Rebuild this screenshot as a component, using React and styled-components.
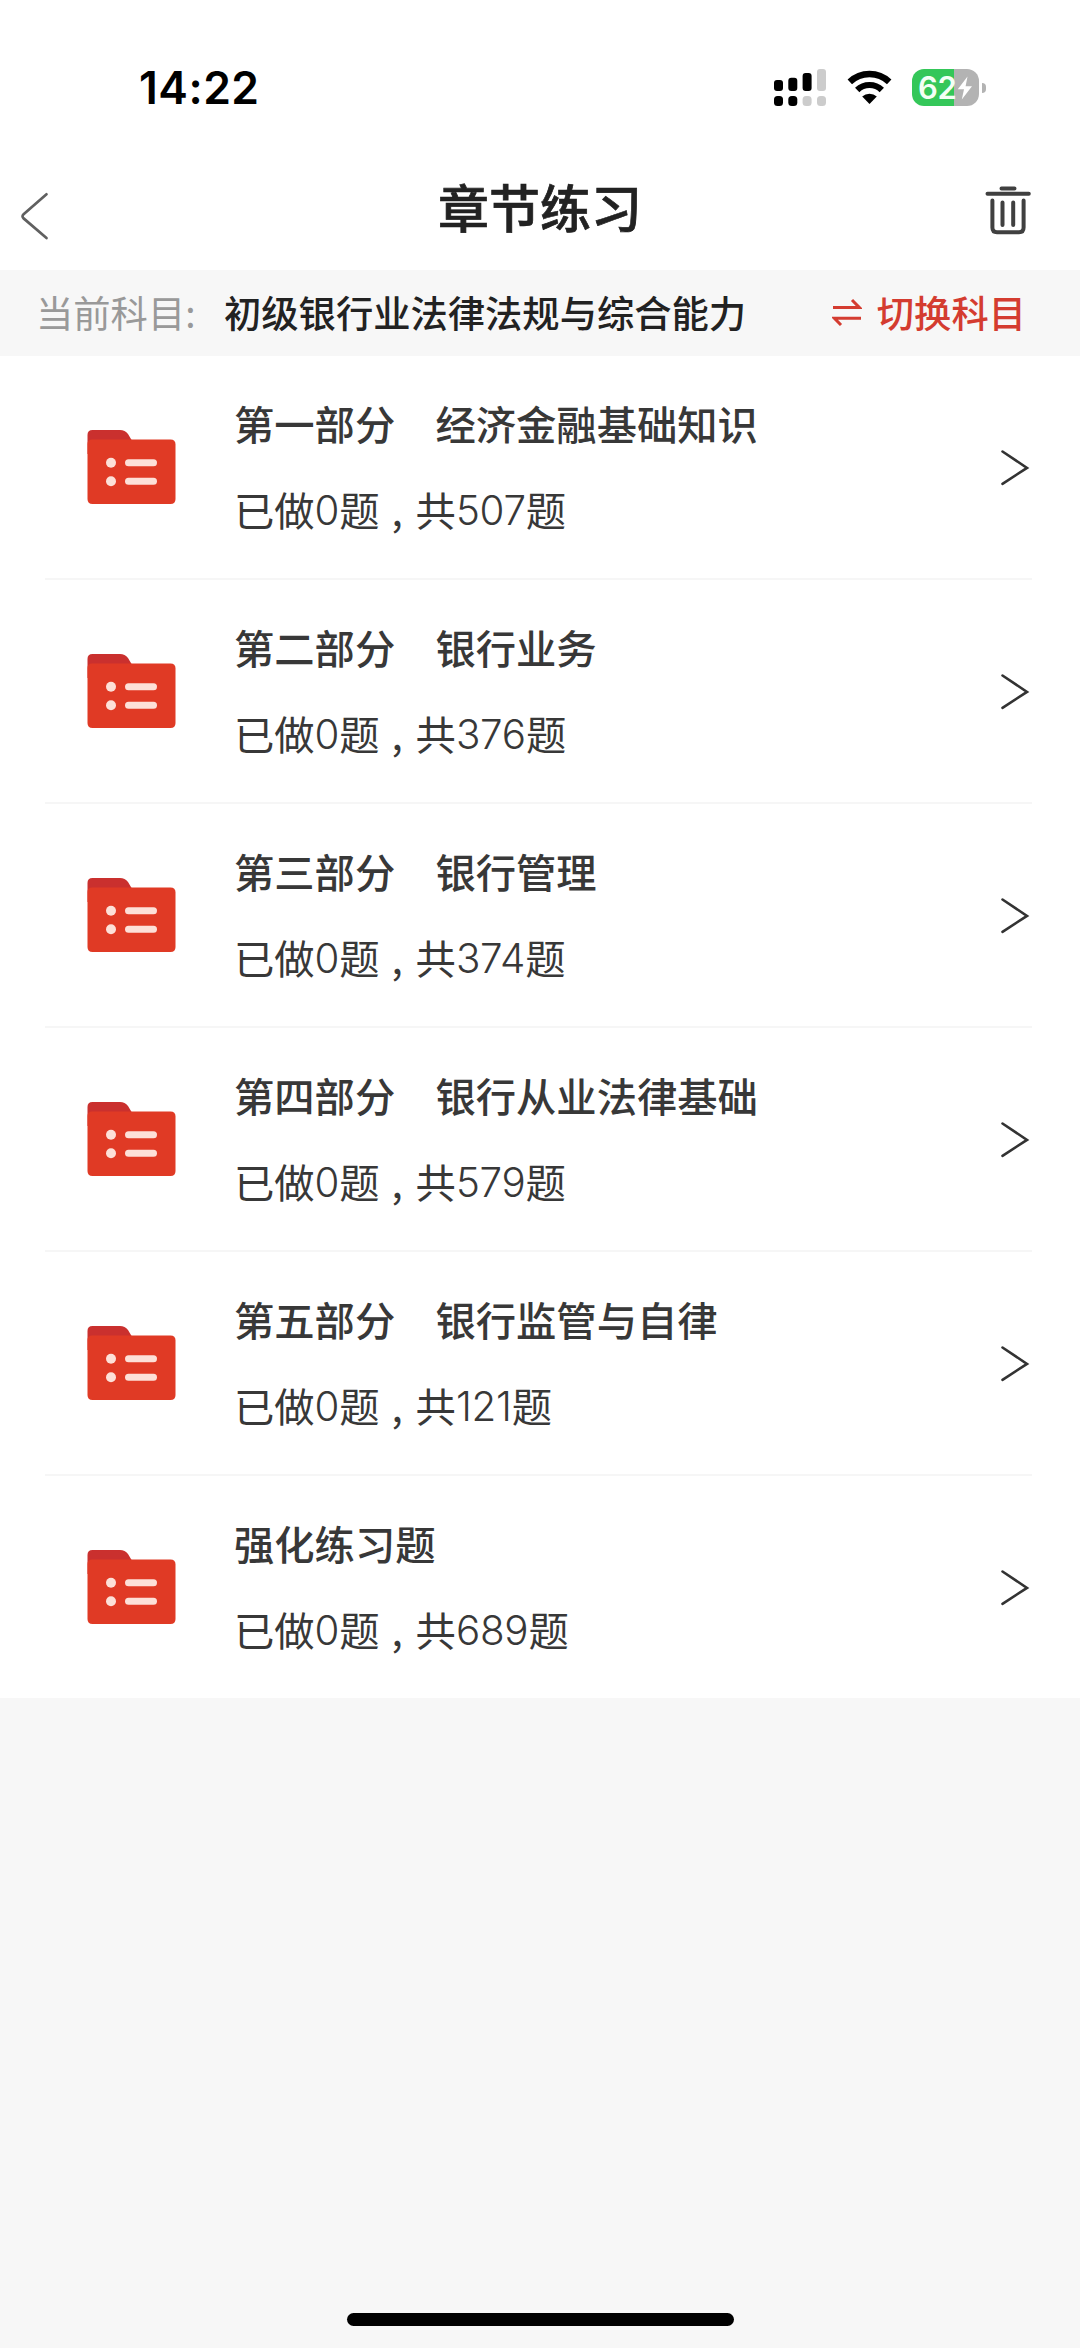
import React from 'react'
import styled, { createGlobalStyle } from 'styled-components'

const GlobalStyle = createGlobalStyle`
  * {
    box-sizing: border-box;
  }

  body {
    margin: 0;
    background: #f7f7f7;
    font-family: "Noto Sans CJK SC", "Noto Sans", sans-serif;
    color: #383838;
  }

  svg {
    display: block;
    flex: none;
  }
`

const chapters = [
  { id: 1, title: '第一部分　经济金融基础知识', done: 0, total: 507 },
  { id: 2, title: '第二部分　银行业务', done: 0, total: 376 },
  { id: 3, title: '第三部分　银行管理', done: 0, total: 374 },
  { id: 4, title: '第四部分　银行从业法律基础', done: 0, total: 579 },
  { id: 5, title: '第五部分　银行监管与自律', done: 0, total: 121 },
  { id: 6, title: '强化练习题', done: 0, total: 689 }
]

const Screen = styled.div`
  display: flex;
  flex-direction: column;
  width: 1080px;
  height: 2348px;
  overflow: hidden;
`

const StatusBar = styled.div`
  display: flex;
  justify-content: space-between;
  height: 140px;
  padding: 60px 94px 0 139px;
  background: #fff;
`
const Time = styled.div`
  height: 56px;
  line-height: 56px;
  font-family: Inter, sans-serif;
  font-size: 44.5px;
  font-weight: 600;
  letter-spacing: 0.5px;
  color: #000;
`
const StatusIcons = styled.div`
  display: flex;
  align-items: flex-start;
  padding-top: 9px;
`
const Wifi = styled.svg`
  margin: 1px 20px 0;
`
const Battery = styled.div`
  display: flex;
  align-items: center;
  height: 37px;
`
const BatteryBody = styled.div`
  display: flex;
  align-items: center;
  width: 67px;
  height: 37px;
  padding-left: 6px;
  border-radius: 12px;
  background: linear-gradient(to right, #34c759 42px, #b3b3b3 42px);
  font-family: Inter, sans-serif;
  font-size: 31px;
  font-weight: 600;
  letter-spacing: -0.3px;
  color: #f3fff5;
`
const BatteryCap = styled.div`
  width: 4px;
  height: 10px;
  margin-left: 3px;
  border-radius: 0 5px 5px 0;
  background: #b3b3b3;
`

const NavBar = styled.header`
  display: grid;
  grid-template-columns: 120px 1fr 120px;
  height: 130px;
  background: #fff;
`
const BackButton = styled.div`
  padding: 52px 0 0 20px;
`
const TrashButton = styled.div`
  padding: 45px 0 0 24px;
`
const PageTitle = styled.h1`
  margin: 0;
  padding-top: 29px;
  line-height: 74px;
  text-align: center;
  font-size: 51px;
  font-weight: 500;
  -webkit-text-stroke: 0.7px #222;
  color: #222;
`

const SubjectBar = styled.div`
  display: flex;
  align-items: center;
  height: 86px;
  padding: 0 54px 3px 36px;
  background: #f7f7f7;
  font-size: 37.3px;
  line-height: 54px;
`
const SubjectLabel = styled.span`
  width: 188px;
  color: #999;
`
const SubjectName = styled.span`
  flex: 1;
  font-weight: 500;
  color: #222;
`
const SwitchSubject = styled.span`
  display: flex;
  align-items: center;
  gap: 15px;
  font-weight: 500;
  color: #d43c30;
`

const ChapterList = styled.ul`
  margin: 0;
  padding: 0;
  list-style: none;
  background: #fff;
`
const ChapterRow = styled.li`
  display: flex;
  height: 224px;
  margin: 0 48px 0 45px;
  padding-left: 42px;
  border-bottom: 2px solid #f6f6f6;

  &:last-child {
    height: 222px;
    border-bottom: none;
  }
`
const FolderSvg = styled.svg`
  margin-top: 74px;
`
const ChapterText = styled.div`
  flex: 1;
  padding: 37px 0 0 58px;
`
const ChapterTitle = styled.div`
  line-height: 60px;
  font-size: 40.3px;
  font-weight: 500;
`
const ChapterCount = styled.div`
  display: flex;
  margin-top: 26px;
  line-height: 60px;
  font-size: 40.3px;
`
const Digits = styled.span`
  padding-top: 2px;
  font-family: Inter, sans-serif;
  font-weight: 350;
  letter-spacing: -0.2px;
`
const Comma = styled.span`
  width: 36px;
  padding-left: 12px;
`
const RowArrow = styled.svg`
  margin-top: 93px;
`

const HomeIndicator = styled.div`
  width: 387px;
  height: 13px;
  margin: auto auto 22px;
  border-radius: 7px;
  background: #000;
`

const SignalIcon = () => (
  <svg width="53" height="38" viewBox="0 0 53 38">
    <g fill="#000">
      <rect x="0" y="11" width="9" height="11" rx="3" />
      <rect x="14.3" y="8.7" width="9" height="13.3" rx="3" />
      <rect x="28.6" y="4" width="9" height="18" rx="3" />
      <rect x="0" y="27" width="9" height="10" rx="3.5" />
      <rect x="14.3" y="27" width="9" height="10" rx="3.5" />
    </g>
    <g fill="#ccc">
      <rect x="43" y="0" width="9" height="22" rx="3" />
      <rect x="28.6" y="27" width="9" height="10" rx="3.5" />
      <rect x="43" y="27" width="9" height="10" rx="3.5" />
    </g>
  </svg>
)

const WifiIcon = () => (
  <Wifi width="45" height="34" viewBox="0 0 45 34">
    <path d="M2.8 11.9A28.5 28.5 0 0 1 42.2 11.9" fill="none" stroke="#000" strokeWidth="6.4" />
    <path d="M10.2 20A17.6 17.6 0 0 1 34.8 20" fill="none" stroke="#000" strokeWidth="6.2" />
    <path d="M22.5 34L15.2 26.6A10.5 10.5 0 0 1 29.8 26.6Z" fill="#000" />
  </Wifi>
)

const BoltIcon = () => (
  <svg width="16" height="24" viewBox="0 0 16 24">
    <path d="M10.5 0.5L0.8 13.2H7L4.8 23.5L15 10.2H8.6Z" fill="#fff" />
  </svg>
)

const BackIcon = () => (
  <svg width="30" height="48" viewBox="0 0 30 48" fill="none" stroke="#606060" strokeWidth="2.7" strokeLinecap="round">
    <path d="M26.5 2.3L3.6 22.2Q1.4 24.3 3.6 26.4L26.5 46" />
  </svg>
)

const TrashIcon = () => (
  <svg width="48" height="50" viewBox="0 0 48 50" fill="none" stroke="#404040" strokeWidth="4" strokeLinecap="round">
    <path d="M17.5 3.5H30.5M3.5 8.7H44.8" />
    <path d="M8.4 15.5V42.5Q8.4 47.3 13 47.3H35Q39.6 47.3 39.6 42.5V15.5M18.5 17.5V40M29.2 17.5V40" />
  </svg>
)

const SwitchIcon = () => (
  <svg width="30" height="28" viewBox="0 0 30 28" fill="none" stroke="currentColor" strokeWidth="3">
    <path d="M1 9.6H27.5L20 2M29 20.2H2.4L9 27" />
  </svg>
)

const FolderIcon = () => (
  <FolderSvg width="89" height="75" viewBox="0 0 89 75">
    <path d="M0.5 20V5Q0.5 0 5.5 0H33Q38 0 41 4L47 14V24H0.5Z" fill="#ca302e" />
    <path d="M0.5 14Q0.5 9.5 5 9.5H83.5Q88.5 9.5 88.5 14.5V69Q88.5 74 83.5 74H5.5Q0.5 74 0.5 69Z" fill="#e03a25" />
    <g fill="#fde0d8">
      <circle cx="24" cy="32.8" r="5" />
      <circle cx="24" cy="51.3" r="5" />
      <rect x="38" y="29.3" width="32" height="7" rx="3.5" />
      <rect x="38" y="47.8" width="32" height="7" rx="3.5" />
    </g>
  </FolderSvg>
)

const ArrowIcon = () => (
  <RowArrow width="32" height="38" viewBox="0 0 32 38" fill="none" stroke="#333" strokeWidth="2.6" strokeLinecap="round">
    <path d="M2.5 2.5L27 18.9L2.5 34.8" />
  </RowArrow>
)

const Chapter = ({ chapter }) => (
  <ChapterRow>
    <FolderIcon />
    <ChapterText>
      <ChapterTitle>{chapter.title}</ChapterTitle>
      <ChapterCount>
        <span>已做</span>
        <Digits>{chapter.done}</Digits>
        <span>题</span>
        <Comma>,</Comma>
        <span>共</span>
        <Digits>{chapter.total}</Digits>
        <span>题</span>
      </ChapterCount>
    </ChapterText>
    <ArrowIcon />
  </ChapterRow>
)

const App = () => {
  return (
    <Screen>
      <GlobalStyle />
      <StatusBar>
        <Time>14:22</Time>
        <StatusIcons>
          <SignalIcon />
          <WifiIcon />
          <Battery>
            <BatteryBody>
              62
              <BoltIcon />
            </BatteryBody>
            <BatteryCap />
          </Battery>
        </StatusIcons>
      </StatusBar>
      <NavBar>
        <BackButton><BackIcon /></BackButton>
        <PageTitle>章节练习</PageTitle>
        <TrashButton><TrashIcon /></TrashButton>
      </NavBar>
      <SubjectBar>
        <SubjectLabel>当前科目:</SubjectLabel>
        <SubjectName>初级银行业法律法规与综合能力</SubjectName>
        <SwitchSubject>
          <SwitchIcon />
          切换科目
        </SwitchSubject>
      </SubjectBar>
      <ChapterList>
        {chapters.map(chapter => <Chapter key={chapter.id} chapter={chapter} />)}
      </ChapterList>
      <HomeIndicator />
    </Screen>
  )
}

export default App
